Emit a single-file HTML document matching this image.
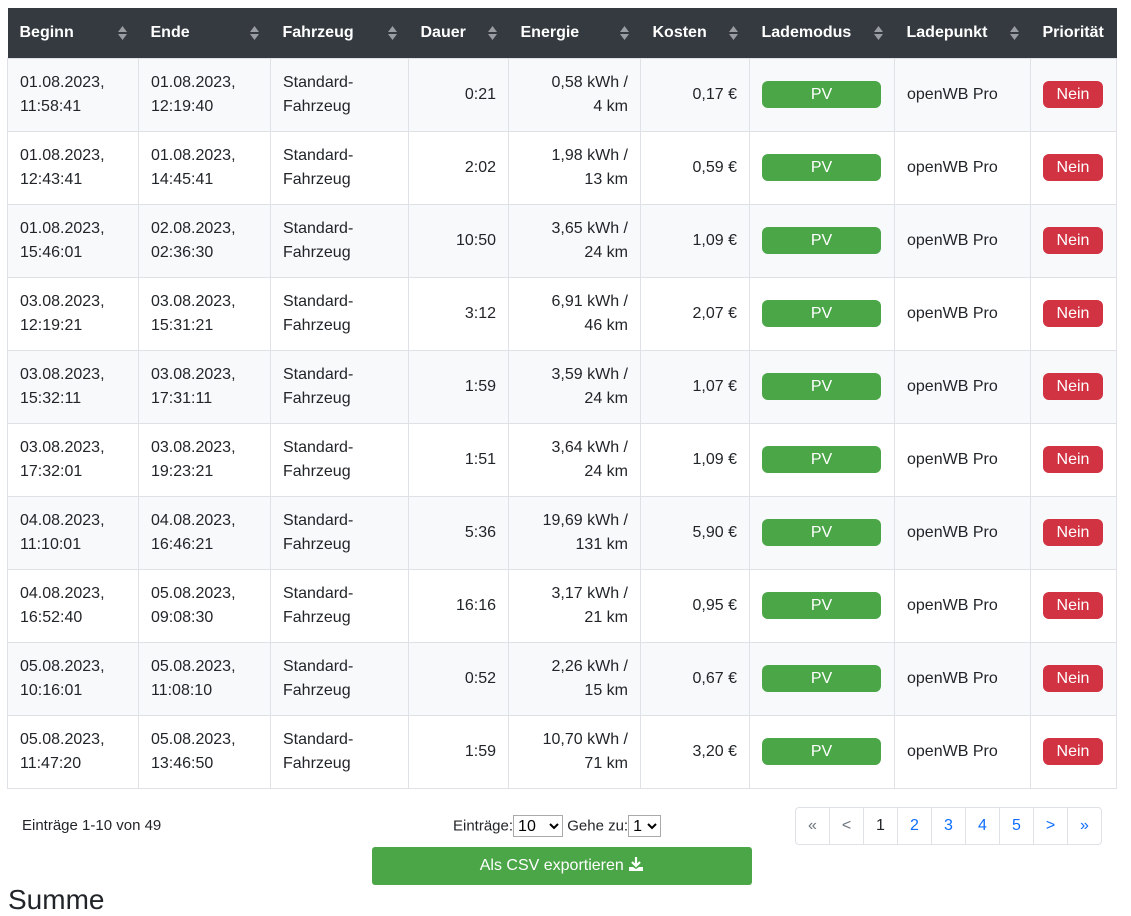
<!DOCTYPE html>
<html><head><meta charset="utf-8"><style>
body{margin:0;background:#fff;font-family:"Liberation Sans",Arial,sans-serif;font-size:16px;color:#212529;width:1131px;height:902px;overflow:hidden;position:relative}
table{position:absolute;left:7px;top:8px;border-collapse:collapse;table-layout:fixed;width:1110px}
th{background:#343a40;color:#fff;font-weight:bold;text-align:left;height:50px;padding:0 12px;box-sizing:border-box;position:relative;white-space:nowrap}
th .s{position:absolute;right:12px;top:17px;width:9px;height:16px}
td{height:73px;border:1px solid #dee2e6;padding:0 12px;box-sizing:border-box;line-height:24px;vertical-align:middle}
tr:nth-child(even) td{background:#f8f9fa}
.r{text-align:right}
.pv{display:block;background:#4ba648;color:#fff;text-align:center;border-radius:6px;height:27px;line-height:27px;width:119px}
.no{display:inline-block;background:#d13343;color:#fff;border-radius:6px;height:27px;line-height:27px;width:60px;text-align:center}
.pag{position:absolute;left:795px;top:807px;display:flex;border:1px solid #dee2e6;border-radius:4px}
.pag span{width:33px;height:36px;line-height:36px;text-align:center;border-left:1px solid #dee2e6;color:#0d6efd;font-size:16px}
.pag span:first-child{border-left:none}
select{font-family:inherit;font-size:16px;height:22px;padding:0;border:1px solid #aaa;background:#fff}
</style></head><body>
<table>
<colgroup><col style="width:131px"><col style="width:132px"><col style="width:138px"><col style="width:100px"><col style="width:132px"><col style="width:109px"><col style="width:145px"><col style="width:136px"><col style="width:86px"></colgroup>
<tr>
<th>Beginn<svg class="s" viewBox="0 0 9 16"><path d="M4.5 1L9 7H0z M4.5 15L9 9H0z" fill="#9a9ea3"/></svg></th>
<th>Ende<svg class="s" viewBox="0 0 9 16"><path d="M4.5 1L9 7H0z M4.5 15L9 9H0z" fill="#9a9ea3"/></svg></th>
<th>Fahrzeug<svg class="s" viewBox="0 0 9 16"><path d="M4.5 1L9 7H0z M4.5 15L9 9H0z" fill="#9a9ea3"/></svg></th>
<th>Dauer<svg class="s" viewBox="0 0 9 16"><path d="M4.5 1L9 7H0z M4.5 15L9 9H0z" fill="#9a9ea3"/></svg></th>
<th>Energie<svg class="s" viewBox="0 0 9 16"><path d="M4.5 1L9 7H0z M4.5 15L9 9H0z" fill="#9a9ea3"/></svg></th>
<th>Kosten<svg class="s" viewBox="0 0 9 16"><path d="M4.5 1L9 7H0z M4.5 15L9 9H0z" fill="#9a9ea3"/></svg></th>
<th>Lademodus<svg class="s" viewBox="0 0 9 16"><path d="M4.5 1L9 7H0z M4.5 15L9 9H0z" fill="#9a9ea3"/></svg></th>
<th>Ladepunkt<svg class="s" viewBox="0 0 9 16"><path d="M4.5 1L9 7H0z M4.5 15L9 9H0z" fill="#9a9ea3"/></svg></th>
<th>Priorität</th>
</tr>
<tr><td>01.08.2023,<br>11:58:41</td><td>01.08.2023,<br>12:19:40</td><td>Standard-<br>Fahrzeug</td><td class="r">0:21</td><td class="r">0,58 kWh /<br>4 km</td><td class="r">0,17 €</td><td><span class="pv">PV</span></td><td>openWB Pro</td><td><span class="no">Nein</span></td></tr>
<tr><td>01.08.2023,<br>12:43:41</td><td>01.08.2023,<br>14:45:41</td><td>Standard-<br>Fahrzeug</td><td class="r">2:02</td><td class="r">1,98 kWh /<br>13 km</td><td class="r">0,59 €</td><td><span class="pv">PV</span></td><td>openWB Pro</td><td><span class="no">Nein</span></td></tr>
<tr><td>01.08.2023,<br>15:46:01</td><td>02.08.2023,<br>02:36:30</td><td>Standard-<br>Fahrzeug</td><td class="r">10:50</td><td class="r">3,65 kWh /<br>24 km</td><td class="r">1,09 €</td><td><span class="pv">PV</span></td><td>openWB Pro</td><td><span class="no">Nein</span></td></tr>
<tr><td>03.08.2023,<br>12:19:21</td><td>03.08.2023,<br>15:31:21</td><td>Standard-<br>Fahrzeug</td><td class="r">3:12</td><td class="r">6,91 kWh /<br>46 km</td><td class="r">2,07 €</td><td><span class="pv">PV</span></td><td>openWB Pro</td><td><span class="no">Nein</span></td></tr>
<tr><td>03.08.2023,<br>15:32:11</td><td>03.08.2023,<br>17:31:11</td><td>Standard-<br>Fahrzeug</td><td class="r">1:59</td><td class="r">3,59 kWh /<br>24 km</td><td class="r">1,07 €</td><td><span class="pv">PV</span></td><td>openWB Pro</td><td><span class="no">Nein</span></td></tr>
<tr><td>03.08.2023,<br>17:32:01</td><td>03.08.2023,<br>19:23:21</td><td>Standard-<br>Fahrzeug</td><td class="r">1:51</td><td class="r">3,64 kWh /<br>24 km</td><td class="r">1,09 €</td><td><span class="pv">PV</span></td><td>openWB Pro</td><td><span class="no">Nein</span></td></tr>
<tr><td>04.08.2023,<br>11:10:01</td><td>04.08.2023,<br>16:46:21</td><td>Standard-<br>Fahrzeug</td><td class="r">5:36</td><td class="r">19,69 kWh /<br>131 km</td><td class="r">5,90 €</td><td><span class="pv">PV</span></td><td>openWB Pro</td><td><span class="no">Nein</span></td></tr>
<tr><td>04.08.2023,<br>16:52:40</td><td>05.08.2023,<br>09:08:30</td><td>Standard-<br>Fahrzeug</td><td class="r">16:16</td><td class="r">3,17 kWh /<br>21 km</td><td class="r">0,95 €</td><td><span class="pv">PV</span></td><td>openWB Pro</td><td><span class="no">Nein</span></td></tr>
<tr><td>05.08.2023,<br>10:16:01</td><td>05.08.2023,<br>11:08:10</td><td>Standard-<br>Fahrzeug</td><td class="r">0:52</td><td class="r">2,26 kWh /<br>15 km</td><td class="r">0,67 €</td><td><span class="pv">PV</span></td><td>openWB Pro</td><td><span class="no">Nein</span></td></tr>
<tr><td>05.08.2023,<br>11:47:20</td><td>05.08.2023,<br>13:46:50</td><td>Standard-<br>Fahrzeug</td><td class="r">1:59</td><td class="r">10,70 kWh /<br>71 km</td><td class="r">3,20 €</td><td><span class="pv">PV</span></td><td>openWB Pro</td><td><span class="no">Nein</span></td></tr>
</table>
<div style="position:absolute;left:22px;top:817px;font-size:15px">Einträge 1-10 von 49</div>
<div style="position:absolute;left:453px;top:815px;font-size:15px">Einträge:<select style="width:50px"><option>10</option></select> Gehe zu:<select style="width:33px"><option>1</option></select></div>
<div class="pag"><span style="color:#6c757d">«</span><span style="color:#6c757d">&lt;</span><span style="color:#212529">1</span><span>2</span><span>3</span><span>4</span><span>5</span><span>&gt;</span><span>»</span></div>
<div style="position:absolute;left:372px;top:847px;width:380px;height:38px;background:#4ba648;border-radius:3px;color:#fff;text-align:center;line-height:38px;font-size:16px">Als CSV exportieren <svg width="16" height="16" viewBox="0 0 16 16" style="vertical-align:-2px"><path d="M8 1v9M4 6l4 4 4-4" stroke="#fff" stroke-width="2.2" fill="none"/><path d="M1 11h4l3 2 3-2h4v4H1z" fill="#fff"/></svg></div>
<div style="position:absolute;left:8px;top:884px;font-size:28px;line-height:32px">Summe</div>
</body></html>
